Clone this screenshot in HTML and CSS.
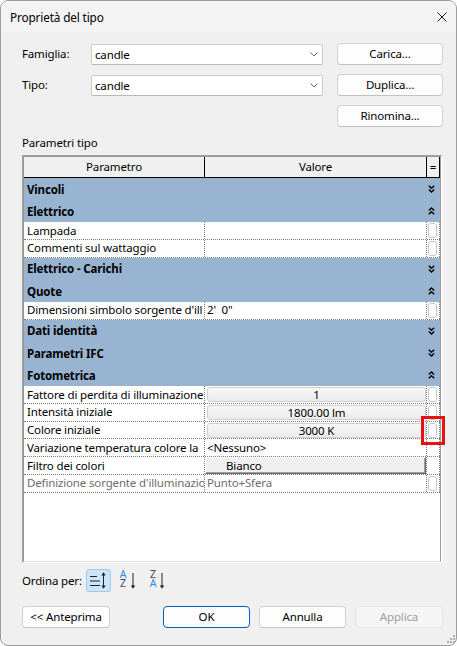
FILE: index.html
```html
<!DOCTYPE html>
<html lang="it">
<head>
<meta charset="utf-8">
<title>Proprietà del tipo</title>
<link rel="stylesheet" href="styles.css">
</head>
<body>
<div class="window">
  <div class="titlebar">
    <span class="title">Proprietà del tipo</span>
    <svg class="close" width="10" height="10" viewBox="0 0 10 10"><path d="M0.5 0.5L9.5 9.5M9.5 0.5L0.5 9.5" stroke="#1b1b1b" stroke-width="1" fill="none"/></svg>
  </div>
  <div class="content">
    <div class="form">
      <span class="lbl">Famiglia:</span>
      <div class="combo"><span>candle</span><svg width="8" height="5" viewBox="0 0 8 5"><path d="M0.5 0.5L4 4L7.5 0.5" stroke="#6a6a6a" stroke-width="1" fill="none"/></svg></div>
      <button class="btn">Carica...</button>
      <span class="lbl">Tipo:</span>
      <div class="combo"><span>candle</span><svg width="8" height="5" viewBox="0 0 8 5"><path d="M0.5 0.5L4 4L7.5 0.5" stroke="#6a6a6a" stroke-width="1" fill="none"/></svg></div>
      <button class="btn">Duplica...</button>
      <button class="btn col3">Rinomina...</button>
    </div>

    <div class="section-label">Parametri tipo</div>

    <div class="frame">
      <div class="grid">
        <div class="hdr">
          <div class="hc">Parametro</div>
          <div class="hc">Valore</div>
          <div class="hc">=</div>
        </div>

        <div class="group"><div class="gname">Vincoli</div><div></div><div class="geq"><svg width="7" height="8" viewBox="0 0 7 8"><path d="M0.8 0.8L3.5 3.3L6.2 0.8M0.8 4.5L3.5 7L6.2 4.5" stroke="#000" stroke-width="1.4" fill="none"/></svg></div></div>
        <div class="group"><div class="gname">Elettrico</div><div></div><div class="geq"><svg width="7" height="8" viewBox="0 0 7 8"><path d="M0.8 3.5L3.5 1L6.2 3.5M0.8 7.2L3.5 4.7L6.2 7.2" stroke="#000" stroke-width="1.4" fill="none"/></svg></div></div>
        <div class="row"><div class="name">Lampada</div><div class="val"></div><div class="eq"><span class="cb"></span></div></div>
        <div class="row"><div class="name">Commenti sul wattaggio</div><div class="val"></div><div class="eq"><span class="cb"></span></div></div>
        <div class="group"><div class="gname">Elettrico - Carichi</div><div></div><div class="geq"><svg width="7" height="8" viewBox="0 0 7 8"><path d="M0.8 0.8L3.5 3.3L6.2 0.8M0.8 4.5L3.5 7L6.2 4.5" stroke="#000" stroke-width="1.4" fill="none"/></svg></div></div>
        <div class="group"><div class="gname">Quote</div><div></div><div class="geq"><svg width="7" height="8" viewBox="0 0 7 8"><path d="M0.8 3.5L3.5 1L6.2 3.5M0.8 7.2L3.5 4.7L6.2 7.2" stroke="#000" stroke-width="1.4" fill="none"/></svg></div></div>
        <div class="row"><div class="name">Dimensioni simbolo sorgente d'ill</div><div class="val">2'&nbsp;&nbsp;0"</div><div class="eq"><span class="cb"></span></div></div>
        <div class="group"><div class="gname">Dati identità</div><div></div><div class="geq"><svg width="7" height="8" viewBox="0 0 7 8"><path d="M0.8 0.8L3.5 3.3L6.2 0.8M0.8 4.5L3.5 7L6.2 4.5" stroke="#000" stroke-width="1.4" fill="none"/></svg></div></div>
        <div class="group"><div class="gname">Parametri IFC</div><div></div><div class="geq"><svg width="7" height="8" viewBox="0 0 7 8"><path d="M0.8 0.8L3.5 3.3L6.2 0.8M0.8 4.5L3.5 7L6.2 4.5" stroke="#000" stroke-width="1.4" fill="none"/></svg></div></div>
        <div class="group"><div class="gname">Fotometrica</div><div></div><div class="geq"><svg width="7" height="8" viewBox="0 0 7 8"><path d="M0.8 3.5L3.5 1L6.2 3.5M0.8 7.2L3.5 4.7L6.2 7.2" stroke="#000" stroke-width="1.4" fill="none"/></svg></div></div>
        <div class="row"><div class="name">Fattore di perdita di illuminazione</div><div class="val"><span class="vbtn">1</span></div><div class="eq"><span class="cb"></span></div></div>
        <div class="row"><div class="name">Intensità iniziale</div><div class="val"><span class="vbtn">1800.00 lm</span></div><div class="eq"><span class="cb"></span></div></div>
        <div class="row"><div class="name">Colore iniziale</div><div class="val"><span class="vbtn">3000 K</span></div><div class="eq"><span class="cb"></span></div></div>
        <div class="row"><div class="name">Variazione temperatura colore la</div><div class="val">&lt;Nessuno&gt;</div><div class="eq"></div></div>
        <div class="row"><div class="name">Filtro dei colori</div><div class="val"><span class="b3d">Bianco</span></div><div class="eq"></div></div>
        <div class="row dim"><div class="name">Definizione sorgente d'illuminazio</div><div class="val">Punto+Sfera</div><div class="eq"><span class="cb"></span></div></div>
      </div>
    </div>

    <div class="sortbar">
      <span class="sortlbl">Ordina per:</span>
      <span class="sicon sel">
        <svg width="25" height="23" viewBox="0 0 25 23">
          <path d="M4 7.5H11M4 12H14M4 16.5H14" stroke="#222" stroke-width="1" fill="none"/>
          <path d="M17.5 5.5V17.5" stroke="#222" stroke-width="1" fill="none"/>
          <path d="M15.3 6.5L17.5 3.3L19.7 6.5Z M15.3 16.5L17.5 19.7L19.7 16.5Z" fill="#222"/>
        </svg>
      </span>
      <span class="sicon alpha">
        <span class="az"><span class="blue">A</span><span class="gray">Z</span></span>
        <svg class="arrow" width="9" height="19" viewBox="0 0 9 19"><path d="M6 1V15" stroke="#222" stroke-width="1" fill="none"/><path d="M3.8 13.5L6 16.8L8.2 13.5Z" fill="#222"/></svg>
      </span>
      <span class="sicon alpha rev">
        <span class="az"><span class="gray">Z</span><span class="blue">A</span></span>
        <svg class="arrow" width="9" height="19" viewBox="0 0 9 19"><path d="M5 1V15" stroke="#222" stroke-width="1" fill="none"/><path d="M2.8 13.5L5 16.8L7.2 13.5Z" fill="#222"/></svg>
      </span>
    </div>

    <div class="actions">
      <button class="btn abtn">&lt;&lt; Anteprima</button>
      <button class="btn abtn ok push">OK</button>
      <button class="btn abtn">Annulla</button>
      <button class="btn abtn disabled">Applica</button>
    </div>
  </div>

  <div class="annot"></div>
  <svg class="grip" width="10" height="10" viewBox="0 0 10 10">
    <rect x="7" y="1" width="2" height="2" fill="#b0b0b0"/>
    <rect x="7" y="4" width="2" height="2" fill="#b0b0b0"/>
    <rect x="4" y="4" width="2" height="2" fill="#b0b0b0"/>
    <rect x="7" y="7" width="2" height="2" fill="#b0b0b0"/>
    <rect x="4" y="7" width="2" height="2" fill="#b0b0b0"/>
    <rect x="1" y="7" width="2" height="2" fill="#b0b0b0"/>
  </svg>
</div>
</body>
</html>
```

FILE: styles.css
```css
* { box-sizing: border-box; }
html, body { margin: 0; padding: 0; }
body {
  width: 457px;
  height: 646px;
  font-family: "Noto Sans", "DejaVu Sans", sans-serif;
  font-size: 11.5px;
  letter-spacing: -0.15px;
  color: #000;
  background: #ffffff;
}
.window {
  position: relative;
  width: 457px;
  height: 646px;
  border: 1px solid #9d9d9d;
  border-radius: 8px;
  background: #f0f0f0;
  overflow: hidden;
  display: flex;
  flex-direction: column;
}
.titlebar {
  flex: none;
  height: 31px;
  background: #f3f3f3;
  display: flex;
  align-items: center;
  justify-content: space-between;
  padding: 0 9px 0 9px;
}
.title { font-size: 11.8px; line-height: 16px; }
.close { display: block; }

.content {
  flex: 1;
  display: flex;
  flex-direction: column;
  padding: 0 13px 0 21px;
}
.form {
  display: grid;
  grid-template-columns: 55px 232px 106px;
  grid-template-rows: 22px 22px 22px;
  column-gap: 14px;
  row-gap: 9px;
  margin-top: 11px;
  align-items: center;
}
.lbl { line-height: 16px; }
.combo {
  height: 21px;
  background: #fff;
  border: 1px solid #cbcbcb;
  border-bottom-color: #b8b8b8;
  border-radius: 2px;
  display: flex;
  align-items: center;
  justify-content: space-between;
  padding: 0 4px 0 3px;
}
.combo svg { display: block; }
.btn {
  height: 22px;
  background: #fdfdfd;
  border: 1px solid #d0d0d0;
  border-bottom-color: #c2c2c2;
  border-radius: 4px;
  font-family: inherit;
  font-size: 11.5px;
  letter-spacing: inherit;
  color: #000;
  padding: 0;
  line-height: 18px;
}
.col3 { grid-column: 3; }

.section-label { margin-top: 8px; line-height: 16px; }

.frame {
  margin-top: 4px;
  height: 408px;
  border-style: solid;
  border-width: 1px 2px 1px 1px;
  border-color: #a0a0a0 #f9f9f9 #fbfbfb #a0a0a0;
}
.grid {
  height: 100%;
  background: #fff;
  border-style: solid;
  border-width: 1px 1px 1px 1px;
  border-color: #9a9a9a #a0a0a0 #e3e3e3 #9a9a9a;
}
.hdr, .group, .row {
  display: grid;
  grid-template-columns: 181px 222px 13px;
}
.hdr {
  height: 21px;
  background: #f0f0f0;
  border-bottom: 1px solid #000;
}
.hc {
  border-right: 1px solid #000;
  display: flex;
  align-items: center;
  justify-content: center;
  line-height: 16px;
}
.group {
  height: 22.2px;
  background: #99b4d1;
}
.gname {
  font-weight: bold;
  padding-left: 3px;
  display: flex;
  align-items: center;
  white-space: nowrap;
}
.geq {
  display: flex;
  align-items: center;
  padding-left: 1px;
}
.geq svg { display: block; }
.row {
  height: 17.7px;
  border-bottom: 1px dotted #7d7d7d;
}
.name, .val, .eq {
  border-right: 1px dotted #7d7d7d;
  display: flex;
  align-items: center;
  white-space: nowrap;
  overflow: hidden;
  line-height: 16px;
}
.name { padding-left: 3px; }
.val { padding-left: 2px; }
.eq { padding-left: 1px; }
.cb {
  display: block;
  width: 9px;
  height: 15px;
  border: 1px solid #c6c6c6;
  border-radius: 3px;
  background: #fff;
}
.vbtn {
  display: block;
  width: 100%;
  height: 15px;
  line-height: 13px;
  text-align: center;
  background: linear-gradient(#f7f7f7, #ebebeb);
  border: 1px solid #cfcfcf;
  border-radius: 3px;
}
.val:has(.b3d) { padding-left: 0; overflow: visible; }
.b3d {
  display: block;
  width: calc(100% + 1px);
  height: 100%;
  background: #f0f0f0;
  border-top: 1px solid #fff;
  border-left: 1px solid #fff;
  border-right: 1px solid #696969;
  border-bottom: 1px solid #696969;
  box-shadow: inset -1px -1px 0 #a0a0a0;
  padding-left: 20px;
  line-height: 15px;
}
.dim .name, .dim .val { color: #6d6d6d; }

.sortbar {
  margin-top: 6px;
  height: 23px;
  display: flex;
  align-items: center;
}
.sortlbl { width: 64px; line-height: 16px; }
.sicon {
  width: 25px;
  height: 23px;
  margin-right: 4px;
  border: 1px solid transparent;
  border-radius: 3px;
  display: flex;
  align-items: center;
  justify-content: center;
}
.sicon svg { display: block; flex: none; }
.sicon.sel {
  background: #cce4f7;
  border-color: #9fcaee;
}
.sicon.alpha {
  justify-content: flex-start;
  padding-left: 3px;
}
.sicon.alpha.rev { padding-left: 4px; }
.az {
  width: 8px;
  margin-top: -3px;
  display: flex;
  flex-direction: column;
  align-items: center;
  font-size: 10.5px;
  letter-spacing: 0;
}
.az span { display: block; line-height: 9px; height: 9px; }
.arrow { margin-top: 1px; }
.blue { color: #2f8ae0; }
.gray { color: #4a4a4a; }

.actions {
  margin-top: 14px;
  display: flex;
  gap: 9px;
}
.abtn { width: 87px; }
.abtn:first-child, .abtn.disabled { width: 88px; }
.push { margin-left: auto; }
.ok { border-color: #005fb8; }
.disabled {
  background: #f5f5f5;
  border-color: #e5e5e5;
  color: #a0a0a0;
}

.annot {
  position: absolute;
  left: 420px;
  top: 415px;
  width: 24px;
  height: 29px;
  border: 3px solid #e81010;
}
.grip {
  position: absolute;
  left: 445px;
  top: 633px;
}
```
